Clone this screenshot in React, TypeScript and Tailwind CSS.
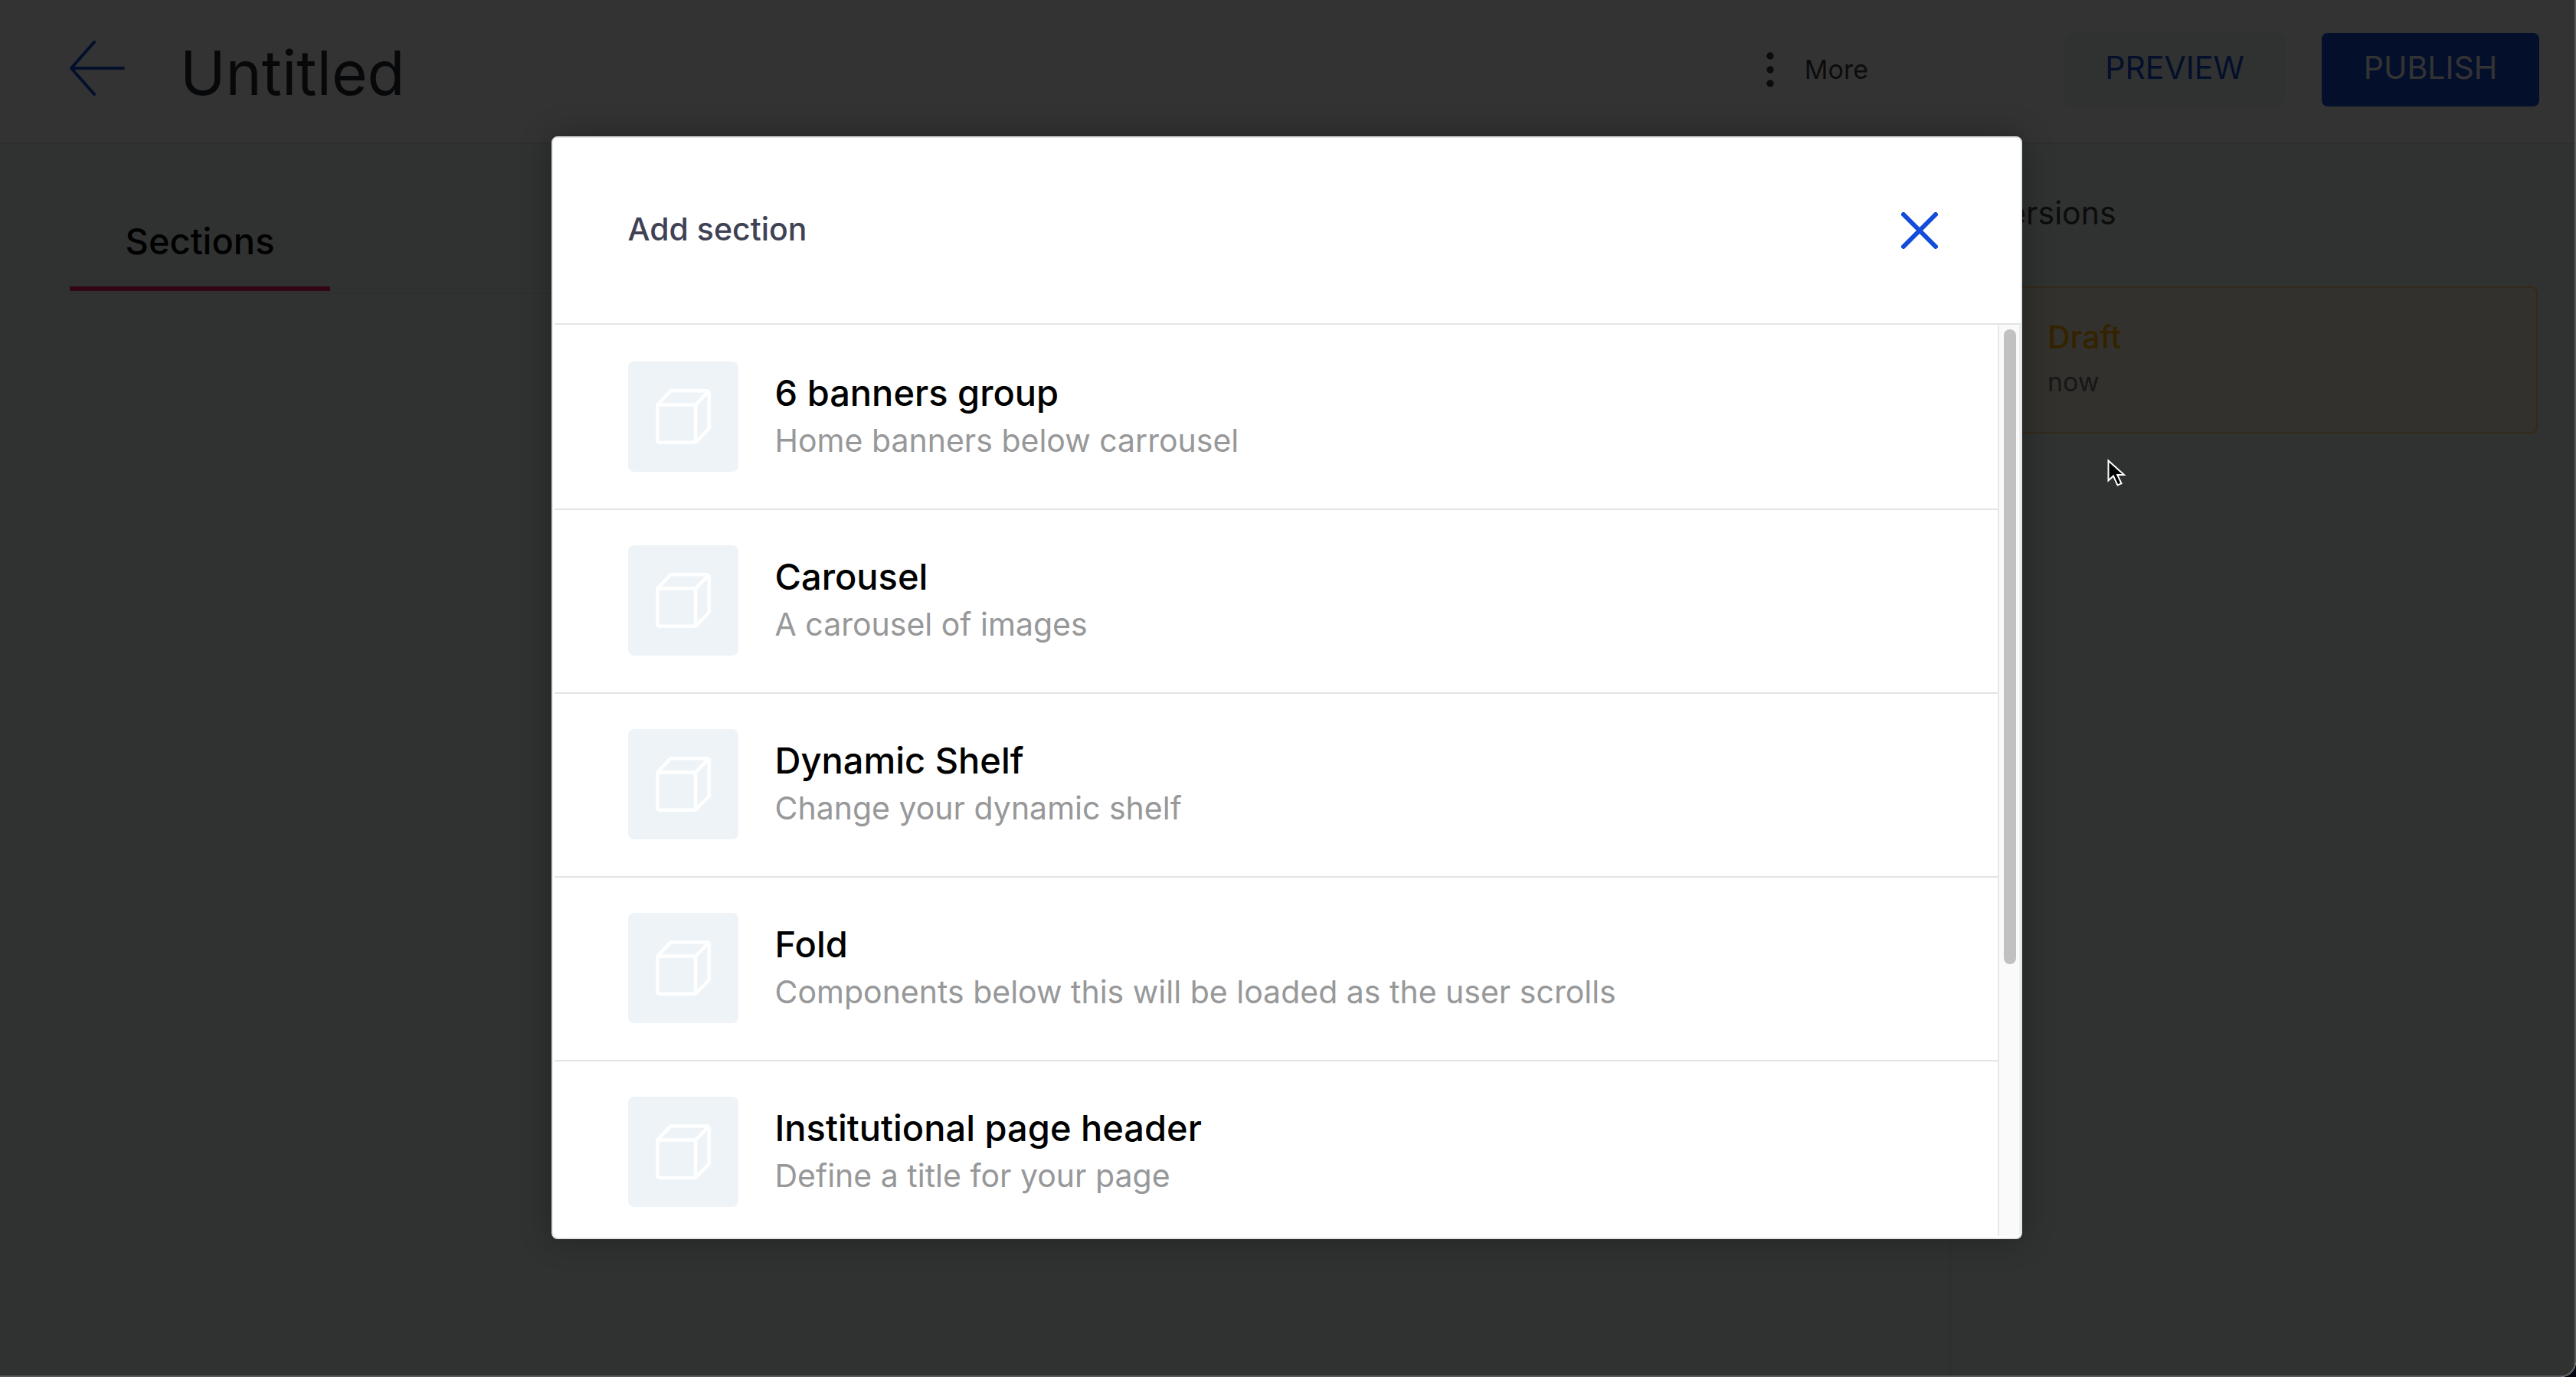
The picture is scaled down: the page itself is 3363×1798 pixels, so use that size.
const sections = [
  { title: "6 banners group", description: "Home banners below carrousel" },
  { title: "Carousel", description: "A carousel of images" },
  { title: "Dynamic Shelf", description: "Change your dynamic shelf" },
  { title: "Fold", description: "Components below this will be loaded as the user scrolls" },
  { title: "Institutional page header", description: "Define a title for your page" },
];

function BackArrow() {
  return (
    <svg className="size-[72px]" viewBox="0 0 72 72" fill="none" stroke="#134cd8" strokeWidth="4" strokeLinecap="round" strokeLinejoin="round" aria-hidden="true">
      <path d="M32 2 2 36l30 34M2 36h68" />
    </svg>
  );
}

function Dots() {
  return (
    <svg className="h-[46px] w-[10px]" viewBox="0 0 10 46" fill="#3f3f40" aria-hidden="true">
      <circle cx="5" cy="5" r="4.7" />
      <circle cx="5" cy="23" r="4.7" />
      <circle cx="5" cy="41" r="4.7" />
    </svg>
  );
}

function Cube() {
  return (
    <svg className="size-[72px]" viewBox="0 0 72 72" fill="none" stroke="#ffffff" strokeWidth="4.6" strokeLinejoin="round" aria-hidden="true">
      <path d="M2.3 20.5h49.7v49.2H5.3a3 3 0 0 1-3-3zL19.5 2.3h47.2a3 3 0 0 1 3 3v46.2L52 69.7M52 20.5 69 3.2" />
    </svg>
  );
}

function Pointer() {
  return (
    <svg className="absolute top-[598px] left-[2750px] h-[40px] w-[28px]" viewBox="0 0 28 40" fill="#000000" stroke="#ffffff" strokeWidth="2" aria-hidden="true">
      <path d="M2.500 3.500v26l6.500-6 5.500 12 5-2.200-5.300-11.300h8.800z" />
    </svg>
  );
}

function Header() {
  return (
    <header className="flex items-center border-b-2 border-[#e3e4e6] bg-white pr-[46px] pl-[91px]">
      <button type="button" aria-label="Back" className="mb-2">
        <BackArrow />
      </button>
      <h1 className="mt-11 mb-10 ml-[72px] text-[80px] leading-[102px] text-[#25282e]">Untitled</h1>
      <div className="mb-1 ml-auto flex items-center">
        <button type="button" className="flex items-center gap-10 text-[34px] leading-[48px] text-[#3f3f40]">
          <Dots />
          More
        </button>
        <button type="button" className="ml-64 h-24 w-72 rounded-lg bg-[#f0f6f3] pb-1 text-[41px] text-[#134cd8]">PREVIEW</button>
        <button type="button" className="ml-12 h-24 w-[284px] rounded-lg bg-[#134cd8] pb-1 text-[41px] text-white">PUBLISH</button>
      </div>
    </header>
  );
}

function Versions() {
  return (
    <aside className="w-[816px] border-l-2 border-[#e3e4e6] px-12 pt-[62px]">
      <h2 className="text-[41px] leading-[56px] text-[#3f3f40]">Versions</h2>
      <div className="mt-[68px] rounded-lg border-2 border-[#ffcd82] bg-[#fff2e0] pt-[34px] pb-9 pl-[76px]">
        <p className="text-[41px] leading-[60px] font-medium text-[#ffb100]">Draft</p>
        <p className="text-[34px] leading-[58px] text-[#727273]">now</p>
      </div>
    </aside>
  );
}

export default function App() {
  return (
    <div className="bg-[#00050f] font-['Inter',sans-serif]">
      <div className="relative flex min-h-screen flex-col overflow-hidden rounded-br-[20px] bg-[#f1f8f5] pr-0.5 pb-0.5">
        <Header />
        <div className="flex flex-1">
          <main className="flex-1 px-[91px] pt-[84px]">
            <div role="tablist" className="border-b-2 border-[#e3e4e6] pb-0.5">
              <button type="button" role="tab" aria-selected="true" className="block h-[108px] w-[340px] border-b-6 border-[#f71963] pb-4 text-[47px] font-medium text-black">
                Sections
              </button>
            </div>
          </main>
          <Versions />
        </div>

        <div className="absolute inset-0 flex justify-center rounded-br-[20px] border-r-2 border-b-2 border-[#5a5a5a] bg-black/80 py-[178px] pr-0.5">
          <section role="dialog" aria-modal="true" aria-labelledby="dialog-title" className="flex w-[1920px] flex-col overflow-hidden rounded-lg border-2 border-[#e3e4e6] bg-white pb-0.5 pl-0.5 shadow-[0_0_40px_rgba(0,0,0,0.3)]">
            <div className="flex items-center justify-between border-b-2 border-[#e3e4e6] py-[85px] pr-[108px] pl-24">
              <h2 id="dialog-title" className="pb-1 text-[41px] leading-[68px] font-medium text-[#3f4254]">Add section</h2>
              <button type="button" aria-label="Close">
                <svg className="size-12" viewBox="0 0 48 48" stroke="#134cd8" strokeWidth="6" strokeLinecap="round" aria-hidden="true">
                  <path d="m3 3 42 42M45 3 3 45" />
                </svg>
              </button>
            </div>
            <div className="flex min-h-0 flex-1">
              <ul className="flex-1 overflow-hidden">
                {sections.map((s) => (
                  <li key={s.title} className="border-t-2 border-[#e3e4e6] first:border-white">
                    <button type="button" className="flex w-full items-center gap-12 px-24 pt-[46px] pb-12 text-left">
                      <span className="flex size-36 items-center justify-center rounded-lg bg-[#edf3f7]">
                        <Cube />
                      </span>
                      <span className="pb-0.5">
                        <span className="block text-[47px] leading-[64px] font-medium text-black">{s.title}</span>
                        <span className="block text-[41px] leading-[60px] text-[#979899]">{s.description}</span>
                      </span>
                    </button>
                  </li>
                ))}
              </ul>
              <div className="w-[30px] border-r-2 border-l-2 border-r-[#efefef] border-l-[#e8e8e8] bg-[#fafafa] px-1.5 pt-1.5">
                <div className="h-[70%] w-4 rounded-full bg-[#c1c1c1]" />
              </div>
            </div>
          </section>
        </div>
        <Pointer />
      </div>
    </div>
  );
}
